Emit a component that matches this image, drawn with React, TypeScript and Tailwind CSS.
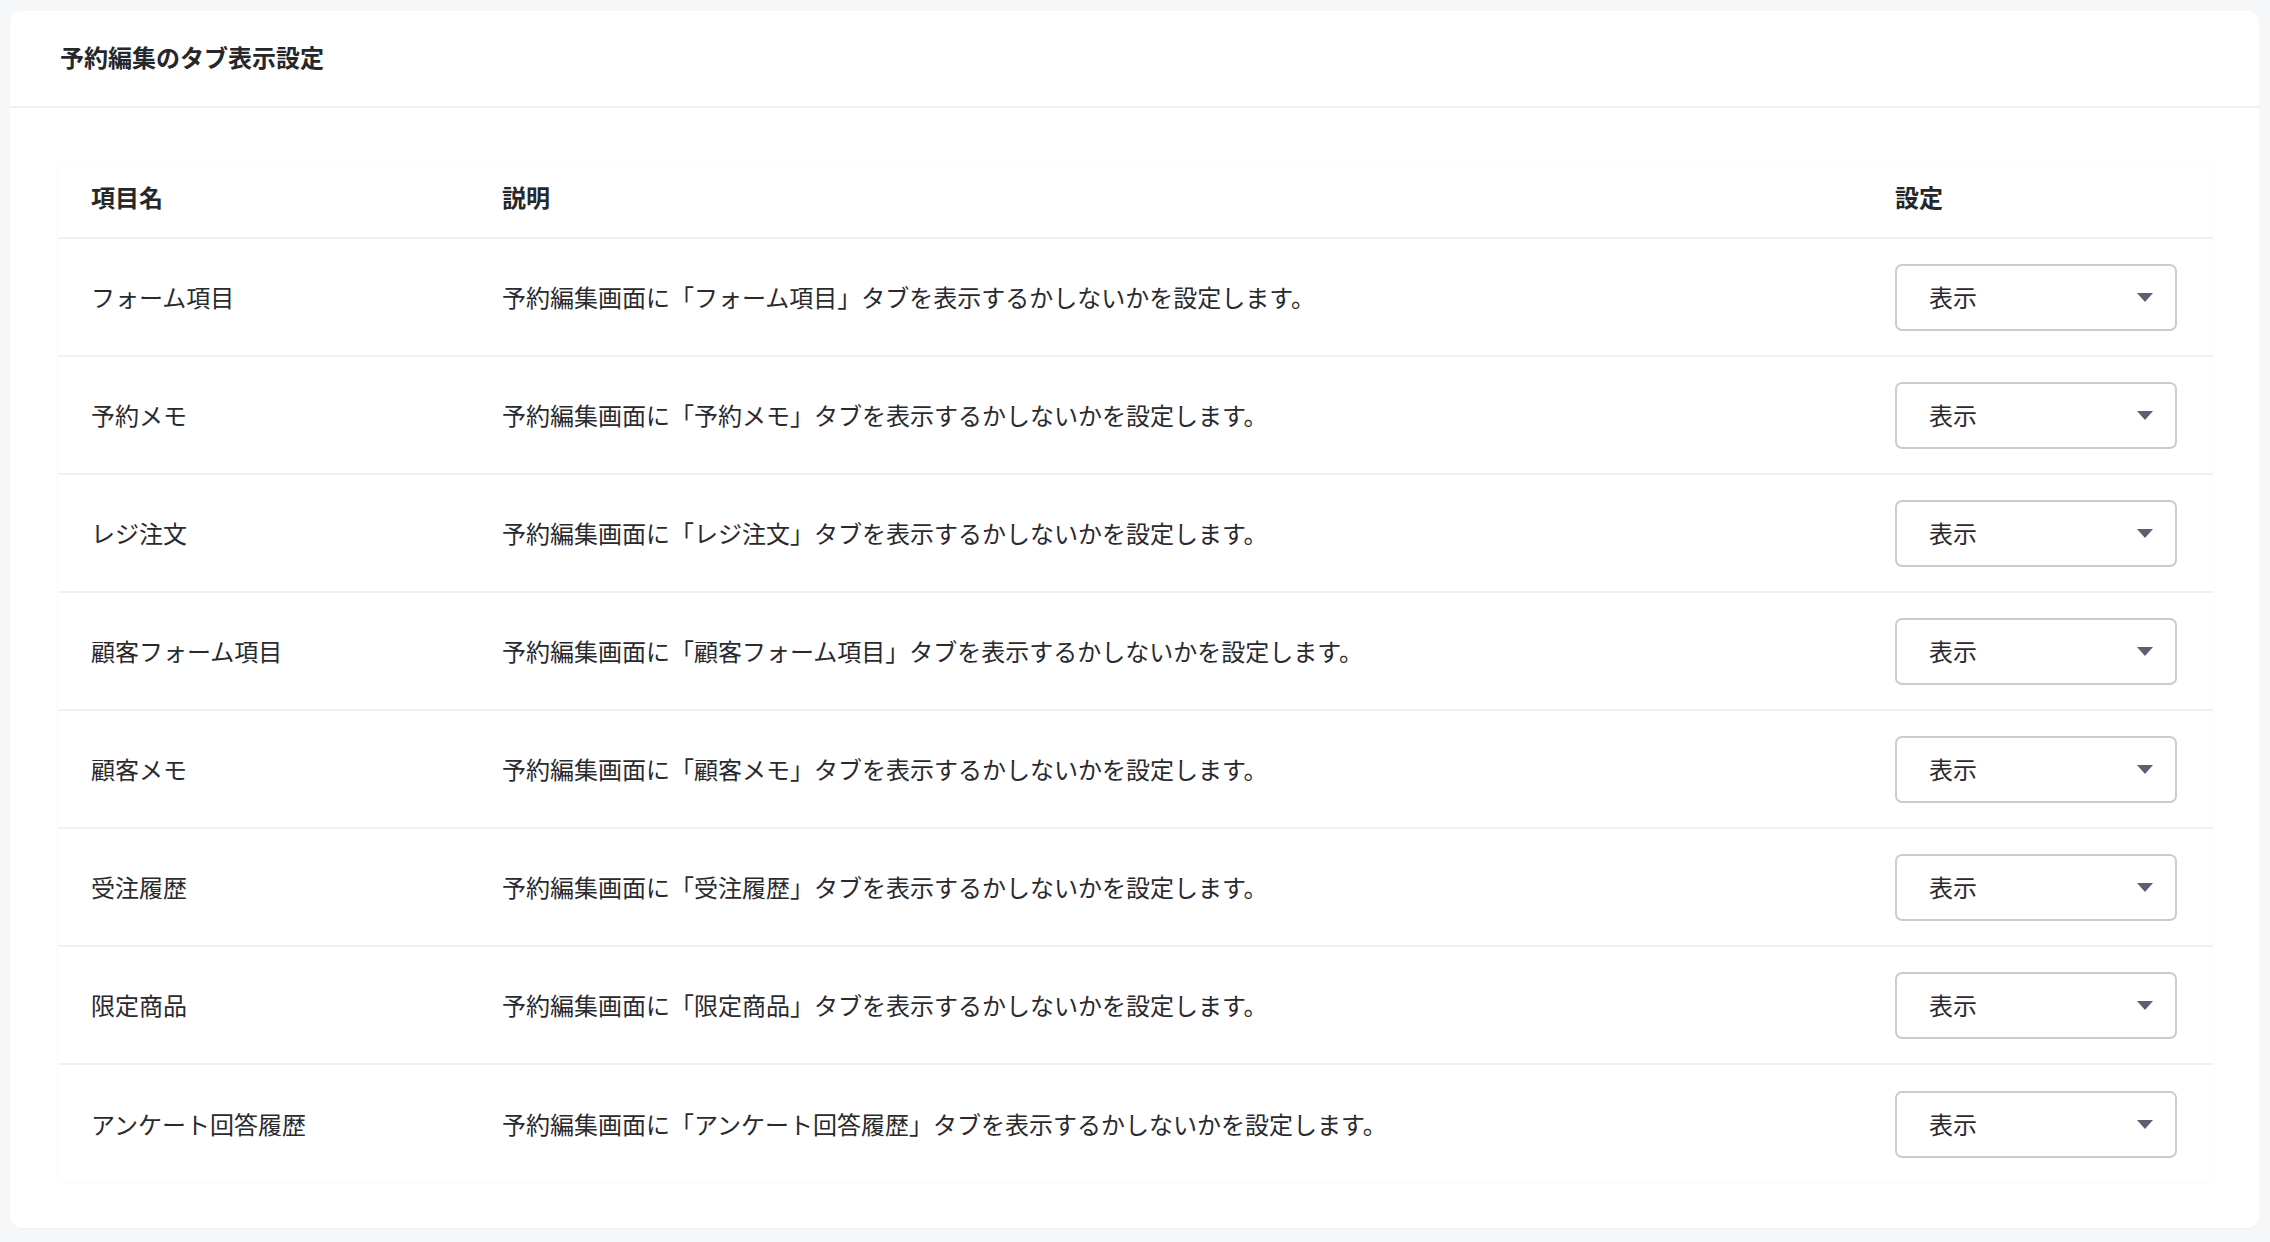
// Reservation-edit tab visibility settings: a card with a title bar and a
// table of tabs, each row carrying a 表示 / 非表示 select.
const ROWS = [
  "フォーム項目",
  "予約メモ",
  "レジ注文",
  "顧客フォーム項目",
  "顧客メモ",
  "受注履歴",
  "限定商品",
  "アンケート回答履歴",
];

function Caret() {
  return (
    <svg width="18" height="11" viewBox="0 0 18 11" className="shrink-0">
      <path d="M1 1h16l-8 9z" fill="#5d5f71" />
    </svg>
  );
}

function VisibilitySelect() {
  return (
    <div className="flex h-[67px] w-[282px] items-center justify-between rounded-[7px] border-2 border-[#cbcbd3] bg-white pl-[32px] pr-[21px]">
      <span className="text-[24px] text-[#2a2a2e]">表示</span>
      <Caret />
    </div>
  );
}

export default function App() {
  return (
    <div
      className="min-h-[1242px] bg-[#f6f7f9] pl-[10px] pr-[11px] pt-[11px]"
      style={{ fontFamily: '"Noto Sans CJK JP", "Noto Sans", sans-serif' }}
    >
      <div className="h-[1217px] rounded-[12px] bg-white shadow-[0_1px_2px_rgba(0,0,0,0.04)]">
        <div className="flex h-[97px] items-center border-b-2 border-[#eff0f2] pl-[50px] pb-[3px]">
          <h1 className="text-[24px] font-bold text-[#26272b]">予約編集のタブ表示設定</h1>
        </div>

        <div className="pl-[48px] pr-[46px] pt-[58px]">
          <div className="rounded-b-[12px] bg-white shadow-[0_0_3px_rgba(0,0,0,0.05)]">
            {/* header row */}
            <div className="flex h-[73px] items-center border-b-2 border-[#eff0f2] pb-[10px] text-[24px] font-bold text-[#26272b]">
              <div className="w-[411px] shrink-0 pl-[33px]">項目名</div>
              <div className="flex-1 pl-[33px]">説明</div>
              <div className="w-[350px] shrink-0 pl-[32px]">設定</div>
            </div>

            {ROWS.map((name, i) => (
              <div
                key={name}
                className={`flex h-[118px] items-center text-[24px] text-[#2a2a2e] ${
                  i < ROWS.length - 1 ? "border-b-2 border-[#eff0f2]" : ""
                }`}
              >
                <div className="w-[411px] shrink-0 pl-[33px]">{name}</div>
                <div className="flex-1 pl-[33px]">
                  予約編集画面に「{name}」タブを表示するかしないかを設定します。
                </div>
                <div className="w-[350px] shrink-0 pl-[32px]">
                  <VisibilitySelect />
                </div>
              </div>
            ))}
          </div>
        </div>
      </div>
    </div>
  );
}
